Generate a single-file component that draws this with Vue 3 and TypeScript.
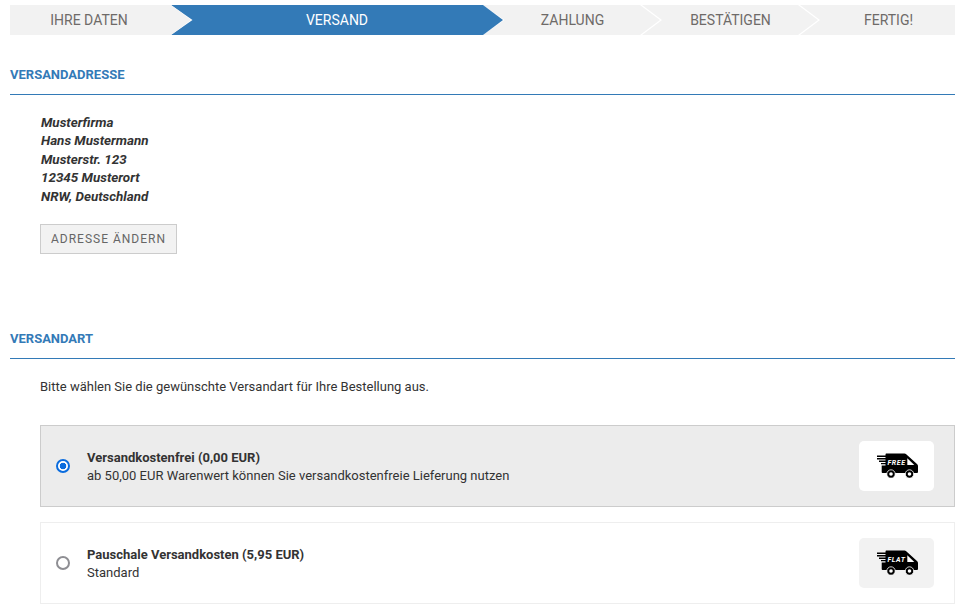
<script setup lang="ts">
interface Step { label: string; active?: boolean }
const steps: Step[] = [
  { label: 'IHRE DATEN' },
  { label: 'VERSAND', active: true },
  { label: 'ZAHLUNG' },
  { label: 'BESTÄTIGEN' },
  { label: 'FERTIG!' }
]
const address = ['Musterfirma', 'Hans Mustermann', 'Musterstr. 123', '12345 Musterort', 'NRW, Deutschland']
interface Option { title: string; text: string; badge: string; selected: boolean }
const options: Option[] = [
  { title: 'Versandkostenfrei (0,00 EUR)', text: 'ab 50,00 EUR Warenwert können Sie versandkostenfreie Lieferung nutzen', badge: 'FREE', selected: true },
  { title: 'Pauschale Versandkosten (5,95 EUR)', text: 'Standard', badge: 'FLAT', selected: false }
]
</script>

<template>
  <div class="page">
    <div class="steps">
      <div v-for="s in steps" :key="s.label" class="step" :class="{ active: s.active }">{{ s.label }}</div>
    </div>

    <h2 class="heading first">VERSANDADRESSE</h2>
    <div class="address-block">
      <address class="address">
        <div v-for="l in address" :key="l">{{ l }}</div>
      </address>
      <button class="btn" type="button">ADRESSE ÄNDERN</button>
    </div>

    <h2 class="heading second">VERSANDART</h2>
    <div class="shipping">
      <p class="intro">Bitte wählen Sie die gewünschte Versandart für Ihre Bestellung aus.</p>
      <div v-for="o in options" :key="o.badge" class="option" :class="{ selected: o.selected }">
        <span class="radio"></span>
        <div class="option-text">
          <div class="option-title">{{ o.title }}</div>
          <div>{{ o.text }}</div>
        </div>
        <div class="icon-box">
          <svg class="truck" width="42" height="25" viewBox="0 0 42 25">
            <path d="M10 .5H28.500Q29.500 .5 30.200 1.200L41 11Q42 12 42 13V19Q42 20 41 20H6.500Q5.700 20 5.700 19V12.500H9.500V2Q9.500 .5 10 .5z" fill="#000"/>
            <path d="M1 2.600H10V4H1zM1 5H10V6.400H1zM3 7.500H10V8.900H3zM5 10H10V11.300H5z" fill="#000"/>
            <path d="M31.300 5.300l7 6.700h-7z" fill="#fff"/>
            <circle cx="15" cy="21" r="4.200" fill="#000" stroke="#fff" stroke-width=".8"/>
            <circle cx="15" cy="21" r="1.800" fill="#fff"/>
            <circle cx="33.500" cy="21" r="4.200" fill="#000" stroke="#fff" stroke-width=".8"/>
            <circle cx="33.500" cy="21" r="1.800" fill="#fff"/>
            <text x="20.500" y="12" text-anchor="middle" class="truck-label">{{ o.badge }}</text>
          </svg>
        </div>
      </div>
    </div>
  </div>
</template>

<style scoped>
.page {
  width: 945px;
  margin: 0 auto 0 10px;
  padding-top: 5px;
  font-family: Roboto, "Liberation Sans", sans-serif;
  font-size: 13px;
  color: #333;
}
.steps {
  display: grid;
  grid-template-columns: 161fr 312fr 157fr 158fr 157fr;
  height: 30px;
  background: #f2f2f2;
}
.step {
  position: relative;
  display: flex;
  align-items: center;
  justify-content: center;
  font-size: 14px;
  color: #6e6a68;
}
.step:not(:last-child)::after {
  content: "";
  position: absolute;
  top: 0;
  right: -22px;
  width: 22px;
  height: 30px;
  background: #fff;
  clip-path: polygon(0 0, 2px 0, 22px 15px, 2px 30px, 0 30px, 20px 15px);
  z-index: 2;
}
.step:first-child::before,
.step.active::before {
  content: "";
  position: absolute;
  top: 0;
  right: -22px;
  width: 22px;
  height: 30px;
  background: #fff;
  clip-path: polygon(0 0, 21.500px 15px, 0 30px);
}
.step.active {
  background: #337ab7;
  color: #fff;
  padding-left: 20px;
  z-index: 1;
}
.step:first-child {
  z-index: 2;
  padding-right: 3px;
}
.step:first-child::after {
  right: -20px;
  width: 20px;
  background: #f2f2f2;
  clip-path: polygon(0 0, 20px 15px, 0 30px);
}
.step.active::after {
  right: -20px;
  width: 20px;
  background: #337ab7;
  clip-path: polygon(0 0, 20px 15px, 0 30px);
}
.step:nth-child(3) { padding-left: 22px; }
.step:nth-child(4) { padding-left: 23px; }
.step:nth-child(5) { padding-left: 24px; }
.heading {
  margin: 0;
  padding-bottom: 12px;
  border-bottom: 1px solid #337ab7;
  font-size: 13px;
  line-height: 14px;
  font-weight: 700;
  color: #337ab7;
}
.heading.first { margin-top: 33px; }
.heading.second { margin-top: 78px; }
.address-block { padding: 18.700px 0 0 30px; }
.address {
  padding-left: 1px;
  font-style: italic;
  font-weight: 700;
  font-size: 13.400px;
  line-height: 18.500px;
}
.btn {
  display: block;
  margin-top: 17.400px;
  width: 137px;
  height: 30px;
  padding: 0;
  border: 1px solid #ccc;
  background: #f2f2f2;
  font-family: inherit;
  font-size: 12px;
  letter-spacing: 1px;
  color: #666;
}
.shipping { padding-left: 30px; }
.intro { margin: 19px 0 29px; line-height: 18px; }
.option {
  display: flex;
  align-items: center;
  height: 82px;
  box-sizing: border-box;
  padding: 0 20px 0 15px;
  border: 1px solid #eee;
  margin-bottom: 15px;
  line-height: 18px;
}
.option.selected {
  background: #ececec;
  border-color: #ccc;
}
.radio {
  width: 14px;
  height: 14px;
  box-sizing: border-box;
  border-radius: 50%;
  border: 2.500px solid #8e8e93;
  background: #fff;
  margin-right: 17px;
  flex: none;
}
.selected .radio {
  border-color: #0a6cde;
  background: radial-gradient(circle, #0a6cde 0 3px, #fff 3.600px);
}
.option-text { flex: 1; padding-top: 2px; }
.option-title { font-weight: 700; }
.icon-box {
  width: 75px;
  height: 50px;
  border-radius: 5px;
  background: #f2f2f2;
  display: flex;
  align-items: center;
  justify-content: center;
}
.selected .icon-box { background: #fff; }
.truck-label {
  font-family: Roboto, sans-serif;
  font-size: 7px;
  font-weight: 700;
  font-style: italic;
  letter-spacing: .6px;
  fill: #fff;
}
</style>
